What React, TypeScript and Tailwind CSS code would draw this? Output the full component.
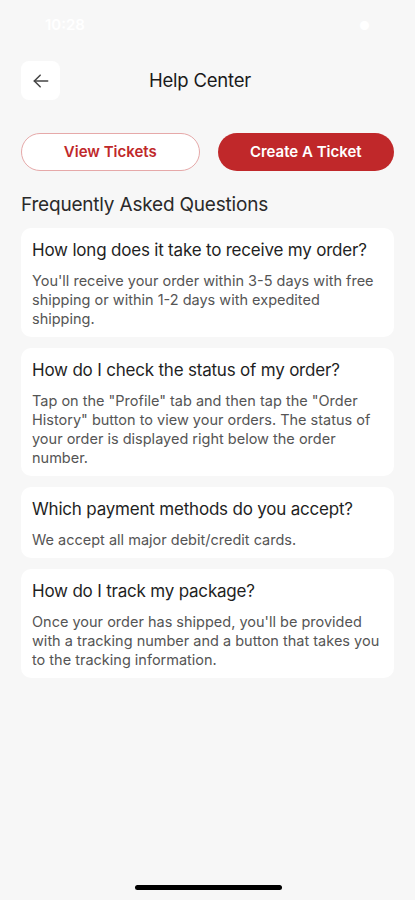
import React from "react";

const faqs = [
  {
    q: "How long does it take to receive my order?",
    a: "You'll receive your order within 3-5 days with free shipping or within 1-2 days with expedited shipping.",
  },
  {
    q: "How do I check the status of my order?",
    a: 'Tap on the "Profile" tab and then tap the "Order History" button to view your orders. The status of your order is displayed right below the order number.',
  },
  {
    q: "Which payment methods do you accept?",
    a: "We accept all major debit/credit cards.",
  },
  {
    q: "How do I track my package?",
    a: "Once your order has shipped, you'll be provided with a tracking number and a button that takes you to the tracking information.",
  },
];

export default function App() {
  return (
    <div
      className="w-[415px] h-[900px] bg-[#f7f7f7] flex flex-col relative overflow-hidden"
      style={{ fontFamily: "Inter, 'Noto Sans', sans-serif" }}
    >
      <div className="h-[61px] flex items-center justify-between px-[45px] pb-[10px]">
        <span className="text-white text-[15px] font-semibold">10:28</span>
        <span className="text-white text-[12px]">●</span>
      </div>
      <div className="relative h-[39px] flex items-center px-[21px]">
        <div className="w-[39px] h-[39px] rounded-lg bg-white flex items-center justify-center">
          <svg width="20" height="20" viewBox="0 0 24 24" fill="none" stroke="#444" strokeWidth="1.8" strokeLinecap="round" strokeLinejoin="round">
            <path d="M20 12H4" />
            <path d="M11 5l-7 7 7 7" />
          </svg>
        </div>
        <div className="absolute left-0 right-[15px] text-center text-[18.5px] text-[#1a1a1a] tracking-[-0.2px]">Help Center</div>
      </div>
      <div className="flex gap-[18px] px-[21px] mt-[33px]">
        <button className="flex-1 h-[38px] rounded-full border border-[#e6a9a9] bg-white text-[#c0282a] text-[15px] font-semibold">
          View Tickets
        </button>
        <button className="flex-1 h-[38px] rounded-full bg-[#c0282a] text-white text-[15px] font-semibold">
          Create A Ticket
        </button>
      </div>
      <div className="px-[21px] mt-[22px] text-[19px] text-[#2a2a2a] leading-[24px] tracking-[-0.2px]">Frequently Asked Questions</div>
      <div className="flex flex-col gap-[11px] px-[21px] mt-[11px]">
        {faqs.map((f) => (
          <div key={f.q} className="bg-white rounded-[10px] pl-[11px] pr-[10px] pt-[11px] pb-[9px]">
            <div className="text-[17px] text-[#1f1f1f] leading-[22px] tracking-[-0.2px]">{f.q}</div>
            <div className="text-[14.5px] text-[#555] leading-[19px] mt-[10px]">{f.a}</div>
          </div>
        ))}
      </div>
      <div className="absolute bottom-[10px] left-[135px] w-[147px] h-[5px] rounded-full bg-black" />
    </div>
  );
}
